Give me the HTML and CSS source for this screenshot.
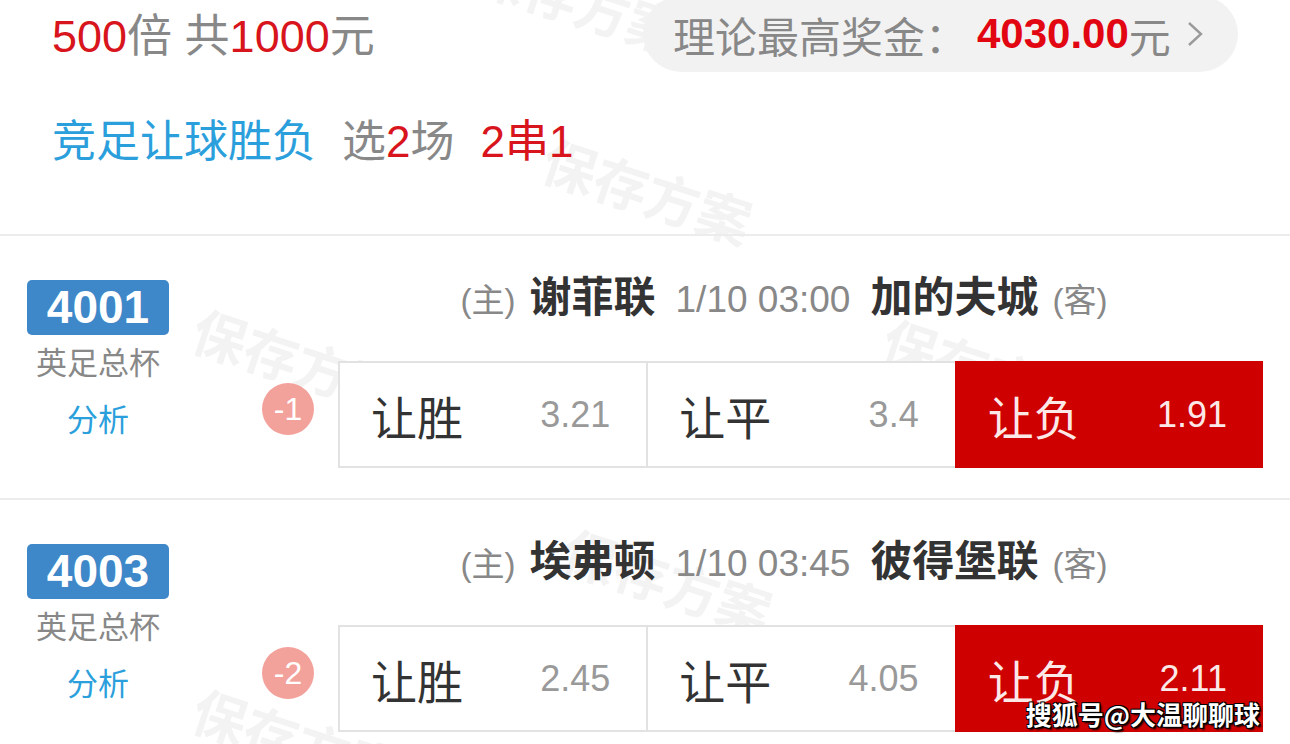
FILE: index.html
```html
<!doctype html>
<html lang="zh-CN">

<head>
  <meta charset="utf-8">
  <meta name="viewport" content="width=device-width, initial-scale=1.0">
  <title>竞足让球胜负 方案</title>
  <link rel="stylesheet" href="styles.css">
</head>

<body>
  <!-- faint "save plan" stamps behind the content -->
  <div class="stamps">
    <span class="stamp s1">保存方案</span>
    <span class="stamp s2">保存方案</span>
    <span class="stamp s3">保存方案</span>
    <span class="stamp s4">保存方案</span>
    <span class="stamp s5">保存方案</span>
    <span class="stamp s6">保存方案</span>
  </div>

  <div class="page">
    <div class="summary">
      <div class="summary-top">
        <div class="total"><span class="red">500</span>倍 共<span class="red">1000</span>元</div>
        <div class="prize">
          理论最高奖金：<b class="prize-num">4030.00</b>元
          <svg class="chevron" width="20" height="28" viewBox="0 0 20 28">
            <path d="M4 3 L16 14 L4 25" fill="none" stroke="#9a9a9a" stroke-width="2.4"/>
          </svg>
        </div>
      </div>
      <div class="play">
        <span class="blue">竞足让球胜负</span>
        <span class="pick">选<span class="red">2</span>场</span>
        <span class="red pick">2串1</span>
      </div>
    </div>

    <div class="match">
      <div class="side">
        <div class="badge">4001</div>
        <div class="league">英足总杯</div>
        <div class="analysis">分析</div>
      </div>
      <div class="content">
        <div class="teams">
          <span class="tag">(主)</span>
          <b class="team">谢菲联</b>
          <span class="time">1/10 03:00</span>
          <b class="team">加的夫城</b>
          <span class="tag">(客)</span>
        </div>
        <div class="odds-row">
          <div class="handicap">-1</div>
          <div class="odds">
            <div class="cell"><span class="label">让胜</span><span class="odd">3.21</span></div>
            <div class="cell"><span class="label">让平</span><span class="odd">3.4</span></div>
            <div class="cell active"><span class="label">让负</span><span class="odd">1.91</span></div>
          </div>
        </div>
      </div>
    </div>

    <div class="match">
      <div class="side">
        <div class="badge">4003</div>
        <div class="league">英足总杯</div>
        <div class="analysis">分析</div>
      </div>
      <div class="content">
        <div class="teams">
          <span class="tag">(主)</span>
          <b class="team">埃弗顿</b>
          <span class="time">1/10 03:45</span>
          <b class="team">彼得堡联</b>
          <span class="tag">(客)</span>
        </div>
        <div class="odds-row">
          <div class="handicap">-2</div>
          <div class="odds">
            <div class="cell"><span class="label">让胜</span><span class="odd">2.45</span></div>
            <div class="cell"><span class="label">让平</span><span class="odd">4.05</span></div>
            <div class="cell active"><span class="label">让负</span><span class="odd">2.11</span></div>
          </div>
        </div>
      </div>
    </div>
  </div>

  <div class="credit">搜狐号@大温聊聊球</div>
</body>
</html>
```

FILE: styles.css
```css
html {
  font-family: "Liberation Sans", "Noto Sans CJK SC", sans-serif;
}

body {
  margin: 0;
  background: #fff;
  color: #888;
  overflow: hidden;
  height: 744px;
  position: relative;
}

.page {
  position: relative;
}

.red {
  color: #d8141c;
}

.blue {
  color: #2b9fdc;
}

/* summary block */
.summary {
  height: 234px;
  padding: 0 52px;
  box-sizing: border-box;
}

.summary-top {
  display: flex;
  justify-content: space-between;
  align-items: center;
  height: 72px;
}

.total {
  font-size: 45px;
  color: #888;
  margin-top: -8px;
}

.prize {
  align-self: flex-end;
  display: flex;
  align-items: center;
  height: 76px;
  width: 595px;
  box-sizing: border-box;
  padding: 0 26px 0 30px;
  border-radius: 38px;
  background: #f2f2f2;
  font-size: 42px;
  color: #888;
  white-space: nowrap;
}

.prize-num {
  color: #e20612;
  margin-left: 10px;
}

.chevron {
  margin-left: 14px;
}

.play {
  font-size: 44px;
  line-height: 50px;
  margin-top: 45px;
  display: flex;
}

.pick {
  margin-left: 26px;
}

/* match rows */
.match {
  display: flex;
  height: 264px;
  border-top: 2px solid #ececec;
  box-sizing: border-box;
}

.side {
  width: 196px;
  display: flex;
  flex-direction: column;
  align-items: center;
  padding-top: 44px;
}

.badge {
  background: #3e87c8;
  color: #fff;
  font-weight: bold;
  font-size: 46px;
  line-height: 55px;
  padding: 0 20px;
  border-radius: 5px;
}

.league {
  font-size: 31px;
  line-height: 40px;
  margin-top: 9px;
  color: #888;
}

.analysis {
  font-size: 31px;
  line-height: 40px;
  margin-top: 17px;
  color: #2b9fdc;
}

.content {
  flex: 1;
}

.teams {
  display: flex;
  justify-content: center;
  align-items: baseline;
  gap: 14px;
  padding-left: 82px;
  padding-top: 37px;
  line-height: 50px;
}

.tag {
  font-size: 33px;
  color: #888;
}

.team {
  font-size: 42px;
  color: #333;
}

.time {
  font-size: 37px;
  color: #888;
  margin: 0 6px;
}

.odds-row {
  display: flex;
  align-items: center;
  margin-top: 35px;
  margin-left: 66px;
}

.handicap {
  width: 52px;
  height: 52px;
  border-radius: 50%;
  background: #f3a19b;
  color: #fff;
  font-size: 32px;
  line-height: 52px;
  text-align: center;
  margin-right: 24px;
  margin-top: -12px;
}

.odds {
  display: flex;
  width: 925px;
  height: 107px;
  border: 2px solid #e2e2e2;
  box-sizing: border-box;
  background: #fff;
}

.cell {
  flex: 1;
  display: flex;
  justify-content: space-between;
  align-items: center;
  padding: 0 36px 0 31px;
  border-left: 2px solid #e2e2e2;
}

.cell:first-child {
  border-left: none;
}

.label {
  font-size: 46px;
  color: #333;
}

.odd {
  font-size: 36px;
  color: #999;
}

.active {
  background: #cf0000;
  border-left-color: #cf0000;
  margin: -2px -2px -2px 0;
}

.active .label,
.active .odd {
  color: #fde8e8;
}

/* background stamps */
.stamp {
  position: absolute;
  font-size: 54px;
  font-weight: bold;
  color: #f3f3f3;
  transform: rotate(18deg);
  white-space: nowrap;
  font-family: "Noto Sans CJK SC", sans-serif;
}

.s1 { left: 540px; top: 150px; }
.s2 { left: 470px; top: -40px; }
.s3 { left: 190px; top: 320px; }
.s4 { left: 880px; top: 330px; }
.s5 { left: 560px; top: 540px; }
.s6 { left: 190px; top: 700px; }

.credit {
  position: absolute;
  right: 30px;
  bottom: 12px;
  font-family: "Noto Sans CJK SC", sans-serif;
  font-weight: bold;
  font-size: 26px;
  color: #fff;
  text-shadow: 1px 1px 0 #000, -1px -1px 0 #000, 1px -1px 0 #000, -1px 1px 0 #000, 2px 2px 2px #000;
}
```
